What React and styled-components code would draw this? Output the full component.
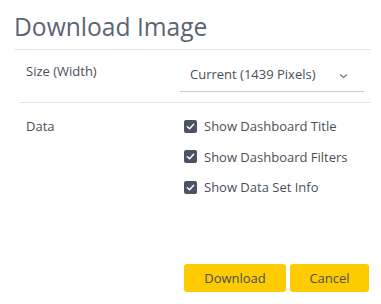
import styled, { createGlobalStyle } from 'styled-components'

const GlobalStyle = createGlobalStyle`
  body {
    margin: 0;
    background: #fff;
    font-family: "Open Sans", "Liberation Sans", sans-serif;
  }
`

const Dialog = styled.div`
  width: 381px;
  height: 304px;
  box-sizing: border-box;
  padding: 12px 10px 0 14px;
  display: flex;
  flex-direction: column;
`

const Title = styled.h1`
  margin: 0;
  padding-bottom: 7px;
  font-size: 24.6px;
  font-weight: 400;
  color: #5b6475;
  line-height: 30px;
  border-bottom: 1px solid #e4e5e8;
`

const Row = styled.div`
  display: grid;
  grid-template-columns: 154px 1fr;
  padding: ${(p) => (p.$divided ? '12px 0 10px 7px' : '14px 0 0 7px')};
  margin-left: 5px;
  ${(p) => p.$divided && 'border-bottom: 1px solid #e4e5e8;'}
`

const Label = styled.div`
  font-size: 13px;
  color: #4a4f5a;
  line-height: 18px;
`

const Select = styled.div`
  margin-right: 7px;
  height: 30px;
  box-sizing: border-box;
  display: flex;
  align-items: flex-start;
  justify-content: space-between;
  padding: 3px 16px 0 10px;
  line-height: 18px;
  border-bottom: 1px solid #c9ccd4;
  font-size: 13px;
  color: #4a4f5a;

  svg {
    margin-top: 8px;
  }
`

const Options = styled.div`
  display: flex;
  flex-direction: column;
  gap: 12.5px;
  padding-left: 4px;
`

const Option = styled.label`
  display: flex;
  align-items: center;
  gap: 7px;
  font-size: 13px;
  color: #4a4f5a;
  line-height: 18px;
`

const Box = styled.span`
  width: 13px;
  height: 13px;
  border-radius: 2px;
  background: #4b5264;
  display: flex;
  align-items: center;
  justify-content: center;
`

const Footer = styled.div`
  margin-top: auto;
  display: flex;
  justify-content: flex-end;
  gap: 4px;
  padding: 0 2px 12px 0;
`

const Button = styled.button`
  height: 28px;
  width: ${(p) => p.$w}px;
  border: none;
  border-radius: 3px;
  background: #fecb00;
  color: #4a4f5a;
  font-family: inherit;
  font-size: 13px;
`

const Check = () => (
  <svg width="9" height="9" viewBox="0 0 10 10">
    <path d="M1.5 5.2 L4 7.5 L8.5 2.5" fill="none" stroke="#fff" strokeWidth="1.6" strokeLinecap="round" strokeLinejoin="round" />
  </svg>
)

const Chevron = () => (
  <svg width="9" height="6" viewBox="0 0 9 6">
    <path d="M1 1.5 L4.5 4.5 L8 1.5" fill="none" stroke="#6b7180" strokeWidth="1.1" />
  </svg>
)

export default function App() {
  const options = ['Show Dashboard Title', 'Show Dashboard Filters', 'Show Data Set Info']
  return (
    <>
      <GlobalStyle />
      <Dialog>
        <Title>Download Image</Title>
        <Row $divided>
          <Label>Size (Width)</Label>
          <Select>
            <span>Current (1439 Pixels)</span>
            <Chevron />
          </Select>
        </Row>
        <Row>
          <Label>Data</Label>
          <Options>
            {options.map((o) => (
              <Option key={o}>
                <Box>
                  <Check />
                </Box>
                {o}
              </Option>
            ))}
          </Options>
        </Row>
        <Footer>
          <Button $w={102}>Download</Button>
          <Button $w={79}>Cancel</Button>
        </Footer>
      </Dialog>
    </>
  )
}
